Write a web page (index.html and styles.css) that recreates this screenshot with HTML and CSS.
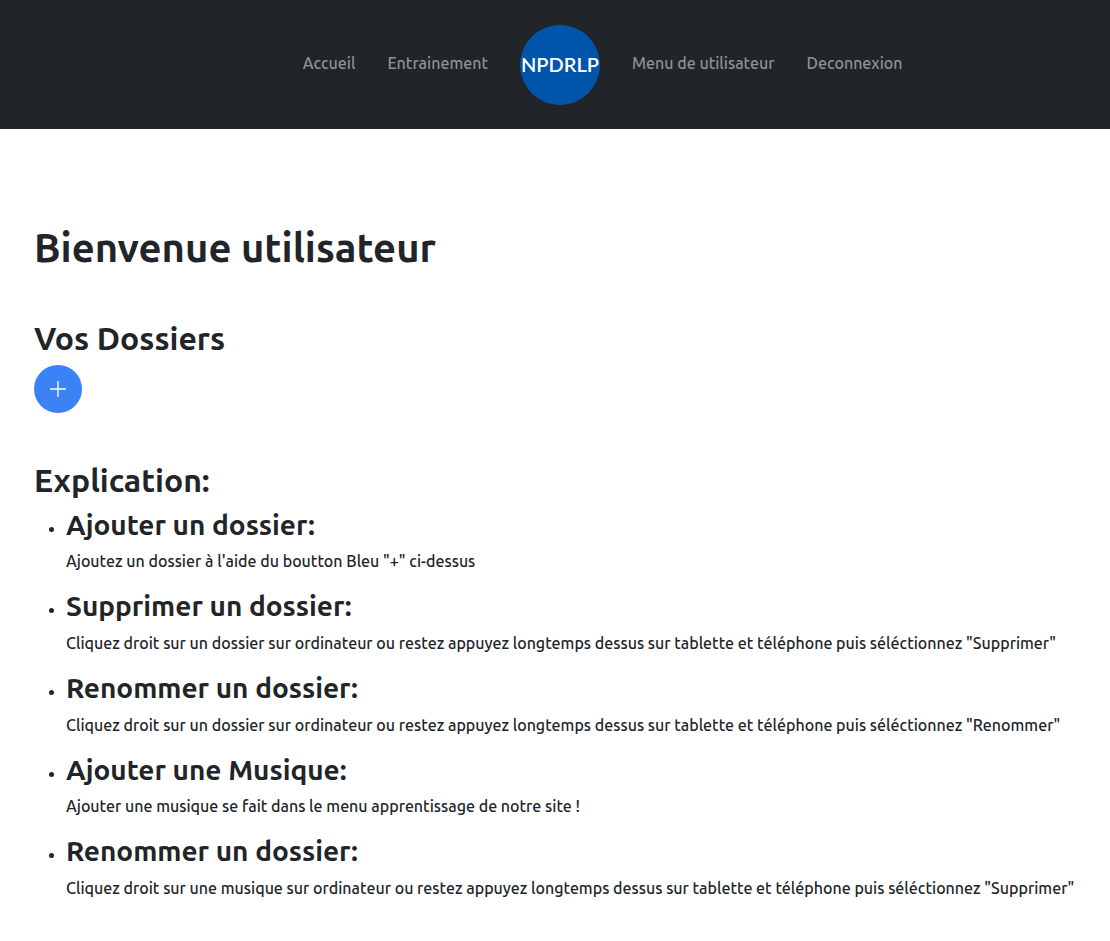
FILE: index.html
```html
<!DOCTYPE html>
<html lang="fr">
<head>
  <meta charset="utf-8">
  <meta name="viewport" content="width=device-width, initial-scale=1">
  <title>Menu de utilisateur</title>
  <link rel="stylesheet" href="styles.css">
</head>
<body>
  <nav class="navbar">
    <div class="nav-side nav-left">
      <a class="nav-link" href="#accueil">Accueil</a>
      <a class="nav-link" href="#entrainement">Entrainement</a>
    </div>
    <a class="brand" href="#accueil" aria-label="NPDRLP">
      <svg class="logo" viewBox="0 0 80 80" aria-hidden="true">
        <circle cx="40" cy="40" r="40" fill="#0055aa"/>
        <text class="logo-text" x="40" y="47" text-anchor="middle">NPDRLP</text>
      </svg>
    </a>
    <div class="nav-side nav-right">
      <a class="nav-link" href="#menu">Menu de utilisateur</a>
      <a class="nav-link" href="#deconnexion">Deconnexion</a>
    </div>
  </nav>
  <main class="content">
    <h1 class="title">Bienvenue utilisateur</h1>
    <section class="folders">
      <h2 class="section-title">Vos Dossiers</h2>
      <button class="add-button" type="button" aria-label="Ajouter un dossier">
        <svg class="add-icon" viewBox="0 0 16 16" aria-hidden="true">
          <path d="M8 .5v15M.5 8h15" fill="none" stroke="#fff" stroke-width="1.3" stroke-linecap="round"/>
        </svg>
      </button>
    </section>
    <section>
      <h2 class="section-title">Explication:</h2>
      <ul class="help-list">
        <li><h3 class="help-title">Ajouter un dossier:</h3><p class="help-text">Ajoutez un dossier à l'aide du boutton Bleu "+" ci-dessus</p></li>
        <li><h3 class="help-title">Supprimer un dossier:</h3><p class="help-text">Cliquez droit sur un dossier sur ordinateur ou restez appuyez longtemps dessus sur tablette et téléphone puis séléctionnez "Supprimer"</p></li>
        <li><h3 class="help-title">Renommer un dossier:</h3><p class="help-text">Cliquez droit sur un dossier sur ordinateur ou restez appuyez longtemps dessus sur tablette et téléphone puis séléctionnez "Renommer"</p></li>
        <li><h3 class="help-title">Ajouter une Musique:</h3><p class="help-text">Ajouter une musique se fait dans le menu apprentissage de notre site !</p></li>
        <li><h3 class="help-title">Renommer un dossier:</h3><p class="help-text">Cliquez droit sur une musique sur ordinateur ou restez appuyez longtemps dessus sur tablette et téléphone puis séléctionnez "Supprimer"</p></li>
      </ul>
    </section>
  </main>
</body>
</html>
```
FILE: styles.css
```css
* {
  box-sizing: border-box;
}

body {
  margin: 0;
  background: #fff;
  color: #212529;
  font-family: Ubuntu, "Noto Sans", "Open Sans", sans-serif;
  font-size: 16px;
  font-weight: 500;
  line-height: 24px;
}

.navbar {
  display: grid;
  grid-template-columns: 1fr auto 1fr;
  align-items: center;
  gap: 32px;
  padding: 25px 0 24px 10px;
  background: #212529;
}

.nav-side {
  display: flex;
  gap: 32px;
  padding-bottom: 4px;
}

.nav-left {
  justify-content: flex-end;
}

.nav-link {
  color: #909293;
  text-decoration: none;
}

.brand,
.logo {
  display: block;
}

.logo {
  width: 80px;
  height: 80px;
}

.logo-text {
  fill: #fff;
  font-family: Lato, "Noto Sans", sans-serif;
  font-size: 20px;
  font-weight: 600;
}

.content {
  padding: 95px 34px 24px;
}

.title,
.section-title,
.help-title {
  margin: 0;
  font-weight: 600;
  line-height: 1.2;
}

.title {
  margin-bottom: 47px;
  font-size: 40px;
}

.section-title {
  margin-bottom: 8px;
  font-size: 32px;
}

.folders {
  margin-bottom: 48px;
}

.add-button {
  display: grid;
  place-items: center;
  width: 48px;
  height: 48px;
  padding: 0;
  border: 0;
  border-radius: 50%;
  background: #3b82f6;
  cursor: pointer;
}

.add-icon {
  display: block;
  width: 16px;
  height: 16px;
}

.help-list {
  margin: 0;
  padding-left: 32px;
}

.help-title {
  margin-bottom: 8px;
  font-size: 28px;
}

.help-text {
  margin: 0 0 16px;
}
```
